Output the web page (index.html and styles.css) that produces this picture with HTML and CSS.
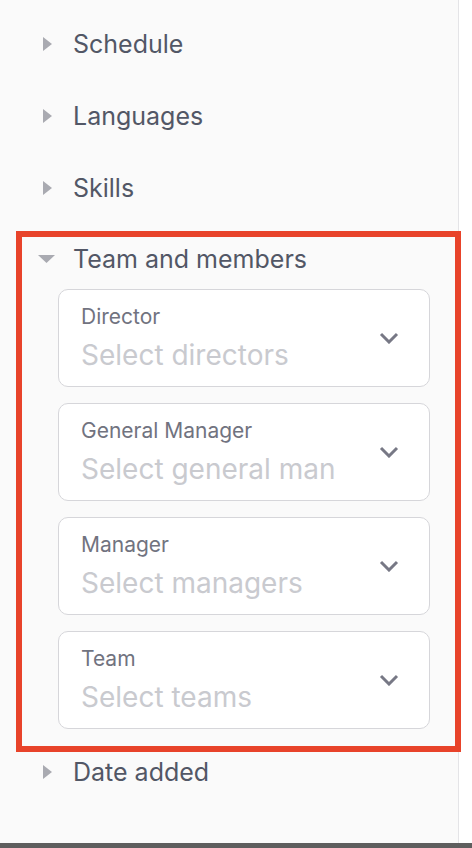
FILE: index.html
```html
<!DOCTYPE html>
<html>
<head>
<meta charset="utf-8">
<link rel="stylesheet" href="styles.css">
</head>
<body>
<div class="page">
  <div class="panel">
    <div class="row">
      <svg class="tri" width="9" height="16" viewBox="0 0 9 16"><path d="M0 1 L9 8 L0 15 Z"/></svg>
      <span class="title">Schedule</span>
    </div>
    <div class="row">
      <svg class="tri" width="9" height="16" viewBox="0 0 9 16"><path d="M0 1 L9 8 L0 15 Z"/></svg>
      <span class="title">Languages</span>
    </div>
    <div class="row">
      <svg class="tri" width="9" height="16" viewBox="0 0 9 16"><path d="M0 1 L9 8 L0 15 Z"/></svg>
      <span class="title">Skills</span>
    </div>
    <div class="group">
      <div class="group-head">
        <svg class="tri-down" width="17" height="8" viewBox="0 0 17 8"><path d="M0 0 L17 0 L8.5 8 Z"/></svg>
        <span class="title">Team and members</span>
      </div>
      <div class="cards">
        <div class="card">
          <div class="field">
            <span class="label">Director</span>
            <span class="placeholder">Select directors</span>
          </div>
          <svg class="chev" width="20" height="12" viewBox="0 0 20 12"><path d="M2 2 L10 10 L18 2"/></svg>
        </div>
        <div class="card">
          <div class="field">
            <span class="label">General Manager</span>
            <span class="placeholder">Select general man</span>
          </div>
          <svg class="chev" width="20" height="12" viewBox="0 0 20 12"><path d="M2 2 L10 10 L18 2"/></svg>
        </div>
        <div class="card">
          <div class="field">
            <span class="label">Manager</span>
            <span class="placeholder">Select managers</span>
          </div>
          <svg class="chev" width="20" height="12" viewBox="0 0 20 12"><path d="M2 2 L10 10 L18 2"/></svg>
        </div>
        <div class="card">
          <div class="field">
            <span class="label">Team</span>
            <span class="placeholder">Select teams</span>
          </div>
          <svg class="chev" width="20" height="12" viewBox="0 0 20 12"><path d="M2 2 L10 10 L18 2"/></svg>
        </div>
      </div>
    </div>
    <div class="row last">
      <svg class="tri" width="9" height="16" viewBox="0 0 9 16"><path d="M0 1 L9 8 L0 15 Z"/></svg>
      <span class="title">Date added</span>
    </div>
  </div>
  <div class="footer"></div>
</div>
</body>
</html>
```

FILE: styles.css
```css
html, body {
  margin: 0;
  padding: 0;
  background: #ffffff;
}
.page {
  width: 472px;
  height: 848px;
  overflow: hidden;
  font-family: Inter, "Noto Sans", sans-serif;
}
.panel {
  width: 459px;
  height: 843px;
  box-sizing: border-box;
  background: #fafafa;
  border-right: 1px solid #e4e4e7;
  padding-top: 8px;
}
.row {
  height: 72px;
  display: flex;
  align-items: center;
  padding-left: 43px;
}
.row.last {
  height: 52px;
}
.tri {
  fill: #a9aab1;
  flex: none;
}
.title {
  font-size: 25px;
  line-height: 30px;
  color: #525766;
  margin-left: 21px;
}
.group {
  margin-top: 13px;
  margin-left: 22px;
  width: 433px;
  outline: 6px solid #e8432a;
  padding-bottom: 17px;
}
.group-head {
  height: 44px;
  display: flex;
  align-items: center;
  padding-left: 16px;
}
.tri-down {
  fill: #a9aab1;
  flex: none;
}
.group-head .title {
  margin-left: 18px;
}
.cards {
  margin-top: 8px;
  margin-left: 36px;
  width: 372px;
  display: flex;
  flex-direction: column;
  gap: 16px;
}
.card {
  height: 98px;
  box-sizing: border-box;
  background: #ffffff;
  border: 1px solid #d6d6da;
  border-radius: 10px;
  display: flex;
  align-items: center;
  padding: 0 30px 0 22px;
}
.field {
  flex: 1;
  display: flex;
  flex-direction: column;
  min-width: 0;
}
.label {
  font-size: 21px;
  line-height: 28px;
  color: #71737f;
}
.placeholder {
  font-size: 28px;
  line-height: 36px;
  color: #c9cacf;
  margin-top: 6px;
  width: 262px;
  white-space: nowrap;
  overflow: hidden;
}
.chev {
  flex: none;
  fill: none;
  stroke: #777885;
  stroke-width: 3;
}
.footer {
  height: 5px;
  background: #5e5e5e;
}
```
